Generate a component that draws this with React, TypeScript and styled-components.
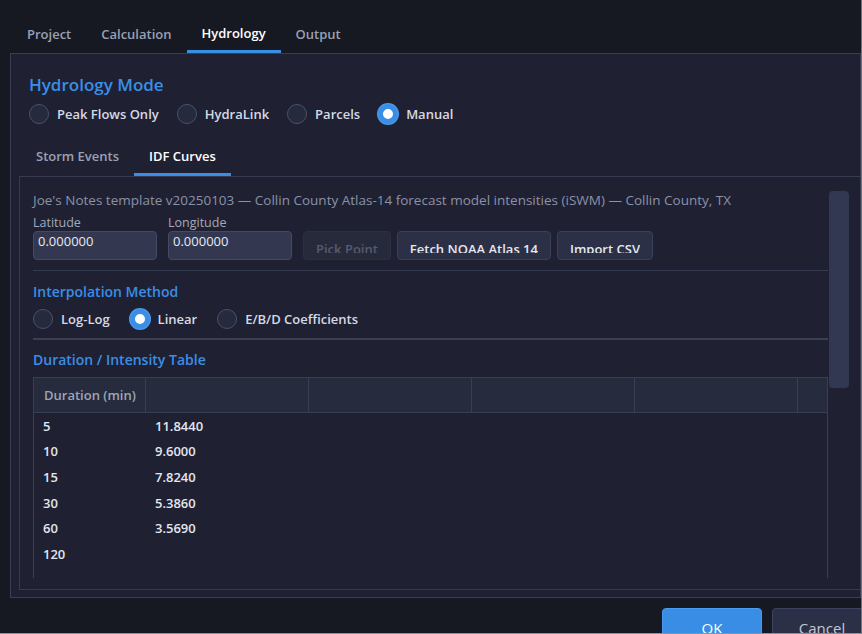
import styled, { createGlobalStyle } from 'styled-components'

const GlobalStyle = createGlobalStyle`
  html, body {
    margin: 0;
    padding: 0;
    background: #161922;
  }
  body {
    font-family: 'Open Sans', 'Noto Sans', sans-serif;
  }
`

const Window = styled.div`
    width: 862px;
    height: 634px;
    box-sizing: border-box;
    overflow: hidden;
    display: flex;
    flex-direction: column;
    background: #161922;
    border-right: 1px solid #6f737d;
    border-bottom: 1px solid #8d9099;
`

const TopTabs = styled.div`
    display: flex;
    align-items: flex-end;
    height: 53px;
    padding-left: 12px;
    flex: none;
`

const Tab = styled.div<{ $active?: boolean; $pad?: number }>`
    padding: 0 15px ${p => p.$pad || 6}px;
    line-height: 20px;
    font-size: 13px;
    font-weight: 600;
    color: ${p => (p.$active ? '#ffffff' : '#9aa0b3')};
    border-bottom: 3px solid ${p => (p.$active ? '#3a8ee6' : 'transparent')};
    white-space: nowrap;
`

const Panel = styled.div`
    flex: none;
    height: 545px;
    margin-left: 10px;
    width: 851px;
    box-sizing: border-box;
    border: 1px solid #393e55;
    background: #1f2133;
    display: flex;
    flex-direction: column;
    padding: 0 0 7px 8px;
`

const ModeHeading = styled.div`
    margin: 19px 0 0 10px;
    font-size: 17px;
    line-height: 24px;
    font-weight: 600;
    color: #3a8ee6;
`

const SectionHeading = styled.div`
    font-size: 14px;
    line-height: 20px;
    font-weight: 600;
    color: #3a8ee6;
`

const RadioRow = styled.div<{ $indent?: number; $gap?: number }>`
    display: flex;
    align-items: center;
    gap: ${p => p.$gap || 20}px;
    margin-left: ${p => p.$indent || 0}px;
    margin-top: 7px;
`

const RadioItem = styled.label`
    display: flex;
    align-items: center;
    gap: 8px;
    font-size: 13px;
    font-weight: 600;
    line-height: 20px;
    color: #d6d9e3;
    white-space: nowrap;
`

const RadioDot = styled.span<{ $checked?: boolean }>`
    width: 20px;
    height: 20px;
    box-sizing: border-box;
    border-radius: 50%;
    flex: none;
    background: ${p => (p.$checked ? '#ffffff' : '#262a3d')};
    border: ${p => (p.$checked ? '5px solid #3a8ee6' : '1.5px solid #4a5070')};
    box-shadow: ${p => (p.$checked ? '0 0 0 1px #4d9bef' : 'none')};
`

const SubTabs = styled.div`
    display: flex;
    margin: 22px 0 0 2px;
`

const InnerBox = styled.div`
    flex: 1;
    min-height: 0;
    display: flex;
    border: 1px solid #363b52;
    border-right: none;
`

const ScrollArea = styled.div`
    flex: 1;
    min-width: 0;
    padding: 14px 0 0 13px;
    display: flex;
    flex-direction: column;
    overflow: hidden;
`

const Track = styled.div`
    width: 32px;
    flex: none;
    padding-top: 14px;
    box-sizing: border-box;
`

const Thumb = styled.div`
    margin-left: 1px;
    width: 20px;
    height: 197px;
    border-radius: 4px;
    background: #323852;
`

const Notes = styled.div`
    font-size: 13.5px;
    line-height: 19px;
    color: #8b91a7;
    white-space: nowrap;
`

const FieldRow = styled.div`
    display: flex;
    align-items: flex-end;
    gap: 11px;
    margin-top: 4px;
`

const Field = styled.div`
    display: flex;
    flex-direction: column;
`

const FieldLabel = styled.div`
    font-size: 12.5px;
    line-height: 16px;
    color: #a3a9bb;
    padding-top: 1px;
`

const Input = styled.div`
    width: 124px;
    height: 29px;
    box-sizing: border-box;
    padding: 1px 4px 0;
    border: 1px solid #444a63;
    border-radius: 4px;
    background: #333850;
    font-size: 13px;
    line-height: 16px;
    color: #e6e8f0;
`

const ButtonGroup = styled.div`
    display: flex;
    gap: 6px;
`

const ToolButton = styled.div<{ $disabled?: boolean }>`
    height: 29px;
    box-sizing: border-box;
    padding: 9px 12px 0;
    border: 1px solid ${p => (p.$disabled ? '#2b2f42' : '#3a4058')};
    border-radius: 4px;
    background: ${p => (p.$disabled ? '#262a3b' : '#2b3046')};
    color: ${p => (p.$disabled ? '#565b70' : '#e6e8f0')};
    font-size: 13px;
    font-weight: 600;
    white-space: nowrap;
`

const ClippedLabel = styled.span`
    display: block;
    height: 12px;
    line-height: 16px;
    overflow: hidden;
`

const Separator = styled.div<{ $thick?: boolean }>`
    height: ${p => (p.$thick ? 2 : 1)}px;
    background: ${p => (p.$thick ? '#3a3f55' : '#363b52')};
    flex: none;
`

const Table = styled.div`
    margin-top: 7px;
    height: 200px;
    flex: none;
    overflow: hidden;
    border: 1px solid #393e55;
    border-bottom: none;
`

const HeaderRow = styled.div`
    display: grid;
    grid-template-columns: 112px repeat(5, 163px);
    height: 34px;
    background: #272b3e;
    border-bottom: 1px solid #393e55;
`

const HeaderCell = styled.div`
    border-right: 1px solid #393e55;
    padding-left: 10px;
    font-size: 13px;
    font-weight: 600;
    line-height: 34px;
    color: #9ea4b8;
    white-space: nowrap;
`

const BodyRow = styled.div`
    display: grid;
    grid-template-columns: 112px 163px;
    height: 25.6px;
    align-items: center;
    &:first-of-type {
        margin-top: 4px;
    }
`

const BodyCell = styled.div`
    padding-left: 9px;
    font-size: 13px;
    font-weight: 600;
    color: #e3e6ef;
`

const Footer = styled.div`
    display: flex;
    justify-content: flex-end;
    gap: 10px;
    padding-top: 10px;
    margin-right: -11px;
`

const DialogButton = styled.div<{ $primary?: boolean }>`
    width: 100px;
    height: 34px;
    box-sizing: border-box;
    border-radius: 4px;
    border: 1px solid ${p => (p.$primary ? '#4a9af0' : '#3c4260')};
    background: ${p => (p.$primary ? '#3a8de4' : '#2b3046')};
    color: ${p => (p.$primary ? '#ffffff' : '#c4c8d6')};
    font-size: 15px;
    line-height: 34px;
    padding-top: 2px;
    text-align: center;
`

const rows: [string, string][] = [
    ['5', '11.8440'],
    ['10', '9.6000'],
    ['15', '7.8240'],
    ['30', '5.3860'],
    ['60', '3.5690'],
    ['120', ''],
]

const App = () => {
  return (
    <Window>
        <GlobalStyle />
        <TopTabs>
            <Tab>{"Project"}</Tab>
            <Tab>{"Calculation"}</Tab>
            <Tab $active $pad={7}>{"Hydrology"}</Tab>
            <Tab>{"Output"}</Tab>
        </TopTabs>

        <Panel>
            <ModeHeading>{"Hydrology Mode"}</ModeHeading>
            <RadioRow $indent={10} $gap={18}>
                <RadioItem><RadioDot />{"Peak Flows Only"}</RadioItem>
                <RadioItem><RadioDot />{"HydraLink"}</RadioItem>
                <RadioItem><RadioDot />{"Parcels"}</RadioItem>
                <RadioItem><RadioDot $checked />{"Manual"}</RadioItem>
            </RadioRow>

            <SubTabs>
                <Tab $pad={7}>{"Storm Events"}</Tab>
                <Tab $pad={7} $active>{"IDF Curves"}</Tab>
            </SubTabs>

            <InnerBox>
                <ScrollArea>
                    <Notes>
                        {"Joe's Notes template v20250103 — Collin County Atlas-14 forecast model intensities (iSWM) — Collin County, TX"}
                    </Notes>
                    <FieldRow>
                        <Field>
                            <FieldLabel>{"Latitude"}</FieldLabel>
                            <Input>{"0.000000"}</Input>
                        </Field>
                        <Field>
                            <FieldLabel>{"Longitude"}</FieldLabel>
                            <Input>{"0.000000"}</Input>
                        </Field>
                        <ButtonGroup>
                            <ToolButton $disabled><ClippedLabel>{"Pick Point"}</ClippedLabel></ToolButton>
                            <ToolButton><ClippedLabel>{"Fetch NOAA Atlas 14"}</ClippedLabel></ToolButton>
                            <ToolButton><ClippedLabel>{"Import CSV"}</ClippedLabel></ToolButton>
                        </ButtonGroup>
                    </FieldRow>

                    <Separator style={{ marginTop: 10 }} />
                    <SectionHeading style={{ marginTop: 11 }}>{"Interpolation Method"}</SectionHeading>
                    <RadioRow>
                        <RadioItem><RadioDot />{"Log-Log"}</RadioItem>
                        <RadioItem><RadioDot $checked />{"Linear"}</RadioItem>
                        <RadioItem><RadioDot />{"E/B/D Coefficients"}</RadioItem>
                    </RadioRow>
                    <Separator $thick style={{ marginTop: 9 }} />

                    <SectionHeading style={{ marginTop: 10 }}>{"Duration / Intensity Table"}</SectionHeading>
                    <Table>
                        <HeaderRow>
                            <HeaderCell>{"Duration (min)"}</HeaderCell>
                            <HeaderCell />
                            <HeaderCell />
                            <HeaderCell />
                            <HeaderCell />
                            <HeaderCell />
                        </HeaderRow>
                        {rows.map(([d, v]) => (
                            <BodyRow key={d}>
                                <BodyCell>{d}</BodyCell>
                                <BodyCell>{v}</BodyCell>
                            </BodyRow>
                        ))}
                    </Table>
                </ScrollArea>
                <Track>
                    <Thumb />
                </Track>
            </InnerBox>
        </Panel>

        <Footer>
            <DialogButton $primary>{"OK"}</DialogButton>
            <DialogButton>{"Cancel"}</DialogButton>
        </Footer>
    </Window>
  )
}

export default App
